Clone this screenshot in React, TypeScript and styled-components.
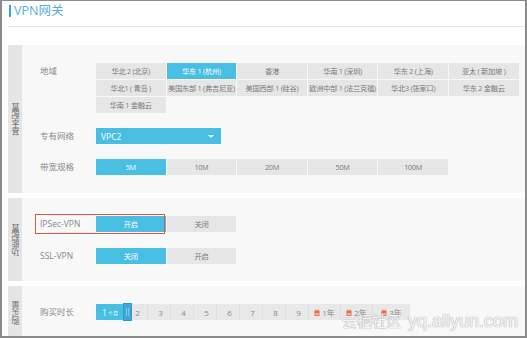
import styled, { createGlobalStyle } from "styled-components";

const GlobalStyle = createGlobalStyle`
  html, body {
    margin: 0;
    padding: 0;
    background: #ffffff;
  }
  body {
    width: 527px;
    height: 338px;
    overflow: hidden;
    font-family: "Open Sans", "Noto Sans CJK SC", sans-serif;
  }
`;

const Frame = styled.div`
  position: relative;
  box-sizing: border-box;
  width: 527px;
  height: 338px;
  border: 2px solid #8a8a8a;
  border-top-width: 1px;
  padding-left: 6px;
  background: #ffffff;
  overflow: hidden;
`;

const Header = styled.div`
  display: flex;
  align-items: center;
  gap: 3px;
  height: 26px;
  border-bottom: 1px solid #e4e4e4;
  padding-left: 1px;
  box-sizing: border-box;
  padding-bottom: 6px;
`;

const TitleBar = styled.span`
  width: 2px;
  height: 12px;
  background: #3aa3d6;
`;

const Title = styled.h1`
  margin: 0;
  font-size: 12.5px;
  font-weight: 400;
  color: #54afdc;
  line-height: 14px;
`;

const Sections = styled.div`
  display: flex;
  flex-direction: column;
  gap: 5px;
  margin-top: 18px;
`;

const Section = styled.section`
  display: flex;
  background: #f8f8f8;
`;

const Strip = styled.div`
  width: 14px;
  flex: none;
  background: #e5e5e5;
  display: flex;
  align-items: center;
  justify-content: center;
`;

const StripText = styled.span`
  writing-mode: vertical-rl;
  transform: rotate(180deg);
  font-size: 8px;
  line-height: 9px;
  color: #6c6c6c;
`;

const Body = styled.div<{ $gap: number; $bottom: number }>`
  flex: 1;
  display: flex;
  flex-direction: column;
  gap: ${(p) => p.$gap}px;
  padding: 18px 0 ${(p) => p.$bottom}px 18px;
`;

const Row = styled.div`
  position: relative;
  display: flex;
  align-items: flex-start;
`;

const Label = styled.div`
  width: 56px;
  flex: none;
  font-size: 8.5px;
  line-height: 16px;
  color: #8a8a8a;
`;

const RegionGrid = styled.div`
  display: grid;
  grid-template-columns: repeat(6, 69.6px);
  grid-auto-rows: 16px;
  gap: 1px 1px;
`;

const Cell = styled.div<{ $active?: boolean; $w?: number }>`
  ${(p) => (p.$w ? `width: ${p.$w}px;` : "")}
  height: 16px;
  display: flex;
  align-items: center;
  justify-content: center;
  white-space: nowrap;
  font-size: 7.3px;
  color: ${(p) => (p.$active ? "#ffffff" : "#7a7a7a")};
  background: ${(p) => (p.$active ? "#48bee3" : "#e6e6e6")};
  letter-spacing: -0.3px;
`;

const ButtonGroup = styled.div`
  display: flex;
  gap: 1px;
`;

const Select = styled.div`
  width: 125px;
  height: 16px;
  box-sizing: border-box;
  padding: 0 7px 0 5px;
  display: flex;
  align-items: center;
  justify-content: space-between;
  background: #48bee3;
  color: #ffffff;
  font-size: 8.5px;
`;

const Caret = styled.span`
  width: 0;
  height: 0;
  border-left: 3px solid transparent;
  border-right: 3px solid transparent;
  border-top: 3px solid #ffffff;
`;

const Highlight = styled.div`
  position: absolute;
  left: -5px;
  top: -2px;
  width: 130px;
  height: 20px;
  box-sizing: border-box;
  border: 1.5px solid #e4573f;
  pointer-events: none;
`;

const Slider = styled.div`
  position: relative;
  display: flex;
  height: 16px;
  background: #e8e8e8;
`;

const MonthFirst = styled.div`
  width: 28px;
  height: 16px;
  display: flex;
  align-items: center;
  justify-content: center;
  gap: 1px;
  background: #48bee3;
  color: #ffffff;
  font-size: 8.5px;
  small {
    font-size: 5px;
  }
`;

const Thumb = styled.div`
  position: absolute;
  left: 27px;
  top: -1px;
  width: 9px;
  height: 18px;
  box-sizing: border-box;
  border: 1px solid #2f9ec9;
  background: #39abd6;
  display: flex;
  justify-content: center;
  align-items: center;
  gap: 1px;
  span {
    width: 1px;
    height: 8px;
    background: #7fcbe6;
  }
`;

const Step = styled.div<{ $w: number }>`
  width: ${(p) => p.$w}px;
  height: 16px;
  box-sizing: border-box;
  border-left: 1px solid #dedede;
  display: flex;
  align-items: center;
  justify-content: center;
  gap: 2px;
  padding-left: 3px;
  font-size: 8px;
  color: #8a8a8a;
`;

const YearStep = styled(Step)`
  padding-left: 0;
`;

const Watermark = styled.div`
  position: absolute;
  right: 7px;
  bottom: 4px;
  display: flex;
  align-items: baseline;
  gap: 6px;
  color: rgba(255, 255, 255, 0.92);
  text-shadow: 0 0 1px #9a9a9a, 0 0 1px #b0b0b0;
  pointer-events: none;
  white-space: nowrap;
`;

const WmCn = styled.span`
  font-family: "Noto Sans CJK SC", sans-serif;
  font-size: 15px;
`;

const WmEn = styled.span`
  font-family: "Liberation Sans", sans-serif;
  font-size: 18px;
`;

const Gift = () => (
  <svg width="6" height="7" viewBox="0 0 6 7">
    <rect x="0.5" y="2" width="5" height="1.6" fill="#f0643a" />
    <rect x="1" y="3.6" width="4" height="3" fill="none" stroke="#f0643a" strokeWidth="0.9" />
    <rect x="2.6" y="2" width="0.8" height="4.6" fill="#f0643a" />
    <path d="M3 2 C2 0.2 0.8 0.6 1.4 2 M3 2 C4 0.2 5.2 0.6 4.6 2" fill="none" stroke="#f0643a" strokeWidth="0.7" />
  </svg>
);

const regions = [
  "华北 2 (北京)",
  "华东 1 (杭州)",
  "香港",
  "华南 1 (深圳)",
  "华东 2 (上海)",
  "亚太 ( 新加坡 )",
  "华北1 ( 青岛 )",
  "美国东部 1 (弗吉尼亚)",
  "美国西部 1 (硅谷)",
  "欧洲中部 1 (法兰克福)",
  "华北3 (张家口)",
  "华东 2 金融云",
  "华南 1 金融云",
];

const bandwidths = ["5M", "10M", "20M", "50M", "100M"];
const months = ["2", "3", "4", "5", "6", "7", "8", "9"];
const years = [
  { label: "1年", w: 32 },
  { label: "2年", w: 32 },
  { label: "3年", w: 38 },
];

export default function App() {
  return (
    <>
      <GlobalStyle />
      <Frame>
        <Header>
          <TitleBar />
          <Title>VPN网关</Title>
        </Header>
        <Sections>
          <Section>
            <Strip>
              <StripText>基本配置</StripText>
            </Strip>
            <Body $gap={15} $bottom={18}>
              <Row>
                <Label>地域</Label>
                <RegionGrid>
                  {regions.map((r) => (
                    <Cell key={r} $active={r === "华东 1 (杭州)"}>
                      {r}
                    </Cell>
                  ))}
                </RegionGrid>
              </Row>
              <Row>
                <Label>专有网络</Label>
                <Select>
                  <span>VPC2</span>
                  <Caret />
                </Select>
              </Row>
              <Row>
                <Label>带宽规格</Label>
                <ButtonGroup>
                  {bandwidths.map((b) => (
                    <Cell key={b} $w={69.6} $active={b === "5M"}>
                      {b}
                    </Cell>
                  ))}
                </ButtonGroup>
              </Row>
            </Body>
          </Section>
          <Section>
            <Strip>
              <StripText>功能配置</StripText>
            </Strip>
            <Body $gap={16} $bottom={17}>
              <Row>
                <Highlight />
                <Label>IPSec-VPN</Label>
                <ButtonGroup>
                  <Cell $w={69.6} $active>
                    开启
                  </Cell>
                  <Cell $w={69.6}>关闭</Cell>
                </ButtonGroup>
              </Row>
              <Row>
                <Label>SSL-VPN</Label>
                <ButtonGroup>
                  <Cell $w={69.6} $active>
                    关闭
                  </Cell>
                  <Cell $w={69.6}>开启</Cell>
                </ButtonGroup>
              </Row>
            </Body>
          </Section>
          <Section>
            <Strip>
              <StripText>购买量</StripText>
            </Strip>
            <Body $gap={16} $bottom={20}>
              <Row>
                <Label>购买时长</Label>
                <Slider>
                  <MonthFirst>
                    1<small>个月</small>
                  </MonthFirst>
                  {months.map((m) => (
                    <Step key={m} $w={23}>
                      {m}
                    </Step>
                  ))}
                  {years.map((y) => (
                    <YearStep key={y.label} $w={y.w}>
                      <Gift />
                      {y.label}
                    </YearStep>
                  ))}
                  <Thumb>
                    <span />
                    <span />
                  </Thumb>
                </Slider>
              </Row>
            </Body>
          </Section>
        </Sections>
        <Watermark>
          <WmCn>云栖社区</WmCn>
          <WmEn>yq.aliyun.com</WmEn>
        </Watermark>
      </Frame>
    </>
  );
}
